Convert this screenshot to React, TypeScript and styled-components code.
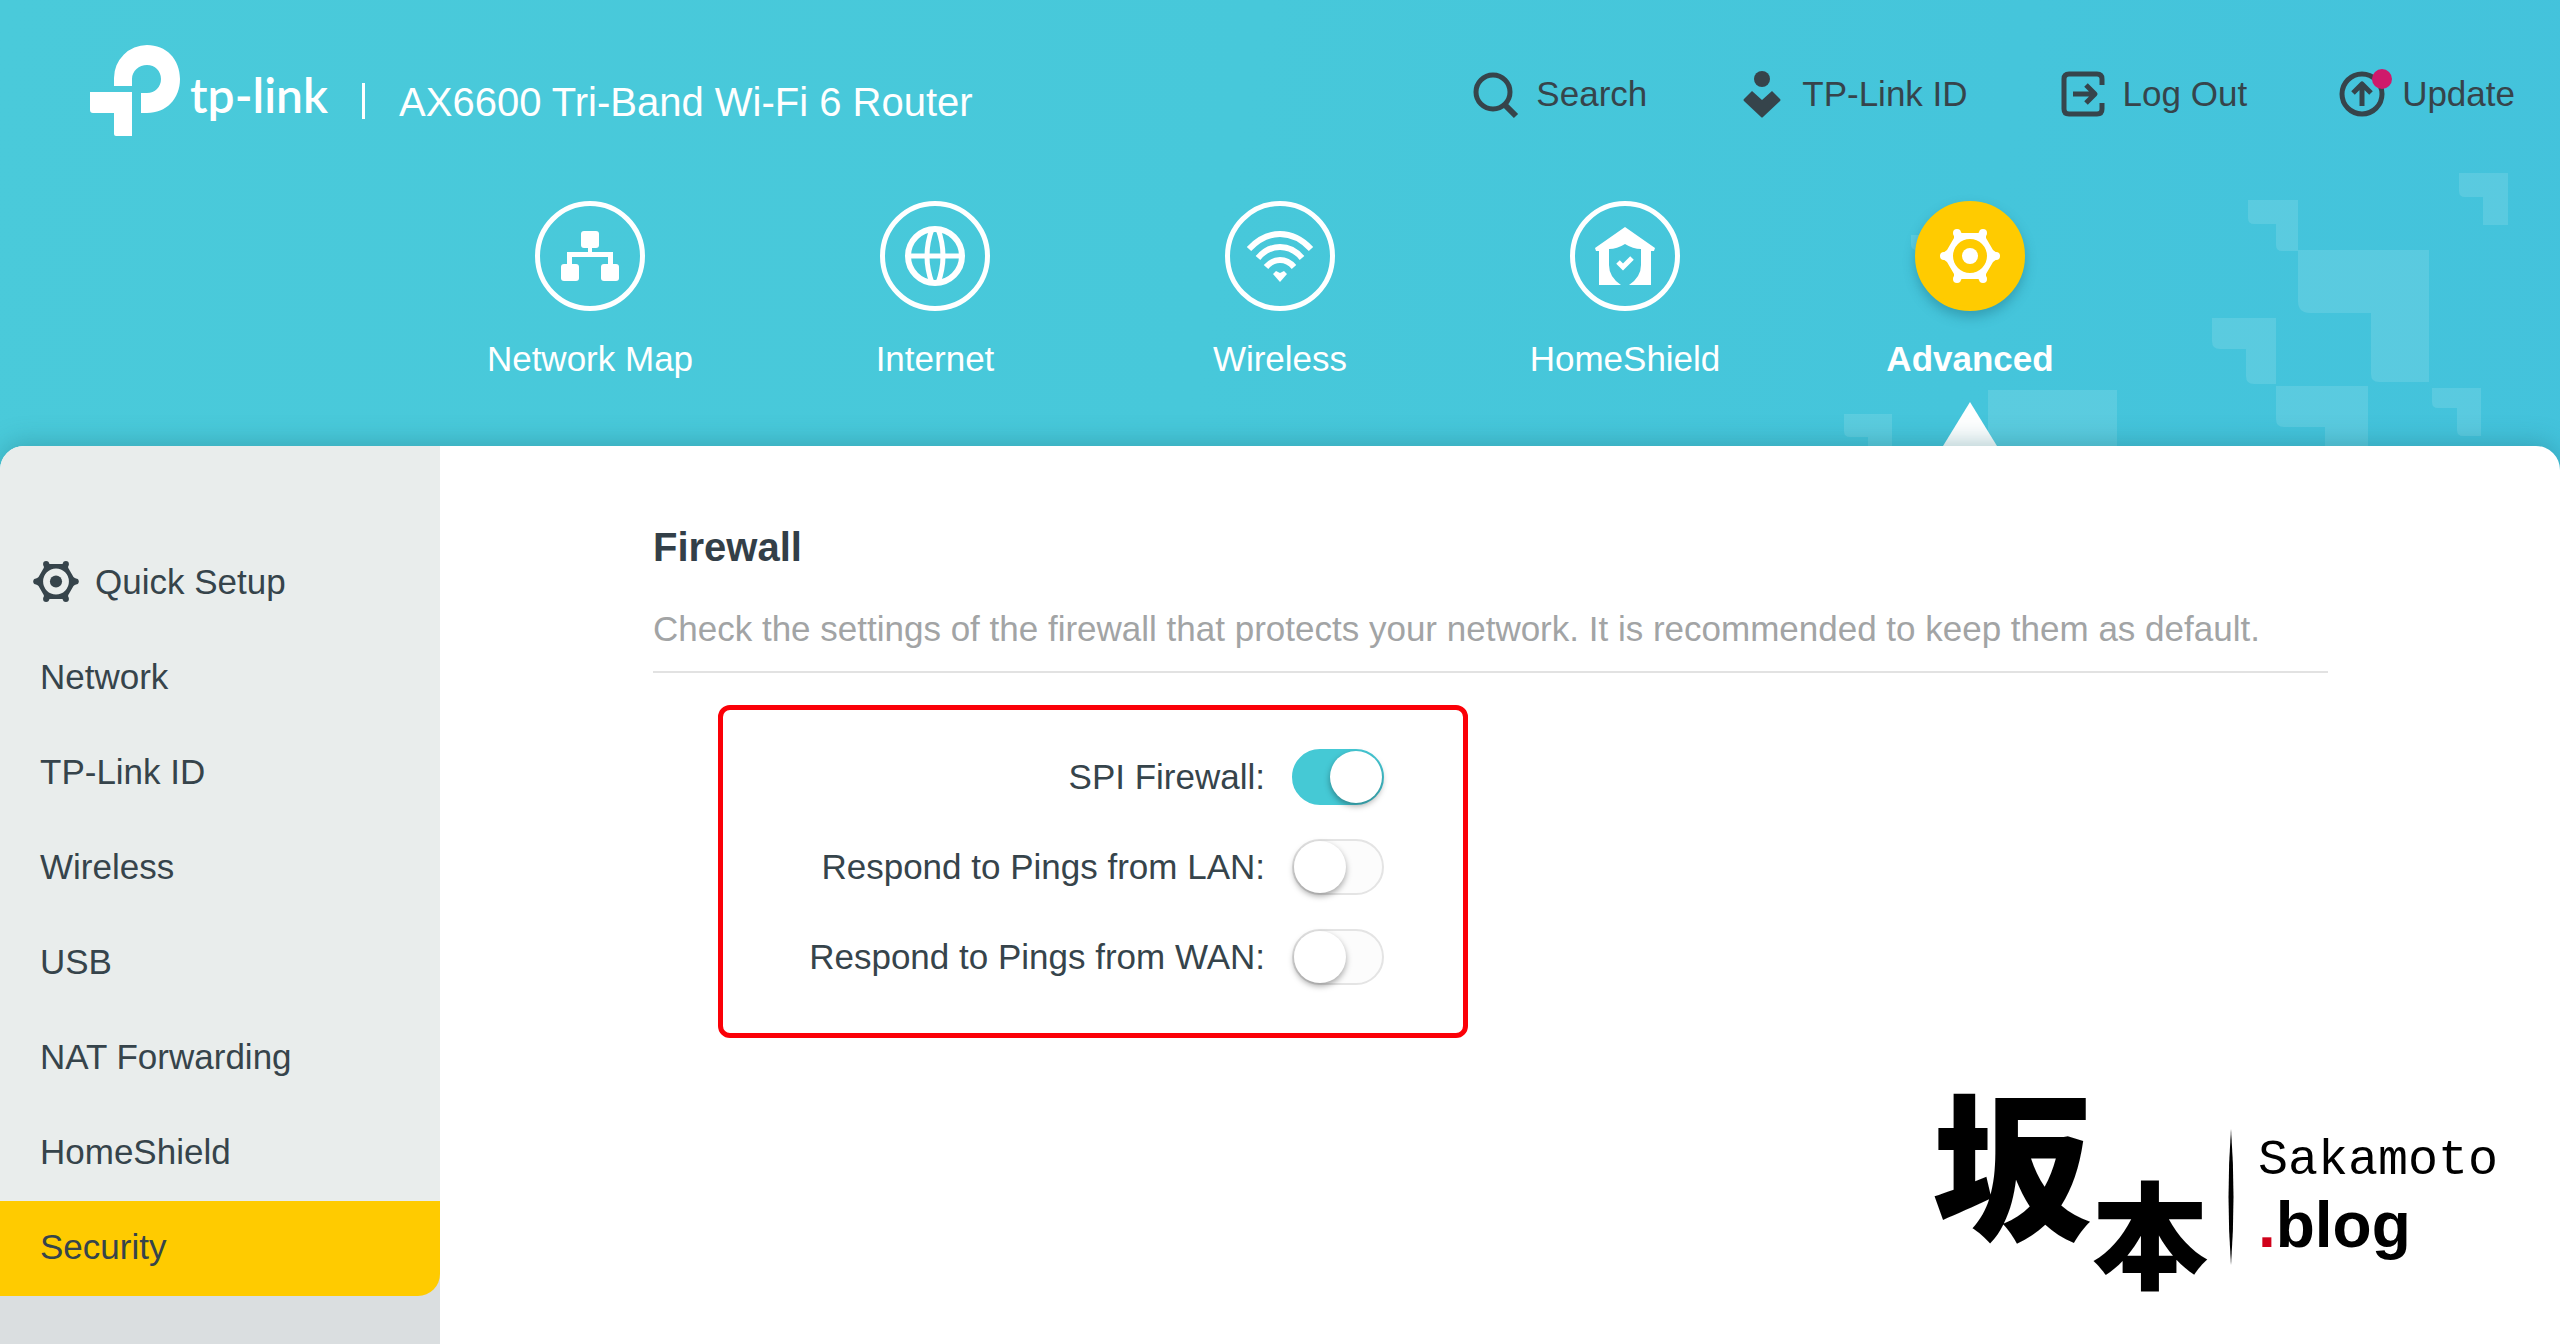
import React, { useState } from 'react';
import styled, { createGlobalStyle, css } from 'styled-components';

const GlobalStyle = createGlobalStyle`
  *, *::before, *::after { box-sizing: border-box; }
  body {
    margin: 0;
    font-family: "Liberation Sans", Arial, sans-serif;
    font-size: 35px;
    line-height: 40px;
    color: #36444b;
  }
  a { color: inherit; text-decoration: none; }
  ul { list-style: none; margin: 0; padding: 0; }
  h1, p { margin: 0; }
`;

const Page = styled.div`
  min-height: 100vh;
  display: flex;
  flex-direction: column;
  background: linear-gradient(100deg, #4acada 0%, #47c8da 45%, #43c2dc 100%);
`;

const Header = styled.header`
  position: relative;
`;

const Pattern = styled.svg`
  position: absolute;
  right: 0;
  bottom: 0;
  width: 760px;
  height: 296px;
  fill: #ffffff;
  fill-opacity: 0.12;
`;

const TopBar = styled.div`
  position: relative;
  display: flex;
  justify-content: space-between;
  align-items: flex-start;
  padding: 45px 45px 0 90px;
`;

const Brand = styled.div`
  display: flex;
  align-items: flex-start;
  color: #ffffff;
`;

const Wordmark = styled.span`
  margin: 22px 0 0 10px;
  font-family: Lato, "Liberation Sans", sans-serif;
  font-size: 48px;
  font-weight: 600;
  line-height: 56px;
`;

const BrandRule = styled.span`
  width: 3px;
  height: 36px;
  margin: 38px 34px 0;
  background: #ffffff;
`;

const Model = styled.span`
  margin-top: 32px;
  font-size: 40px;
  line-height: 50px;
`;

const Tools = styled.nav`
  display: flex;
  gap: 93px;
  padding-top: 26px;
`;

const Tool = styled.a`
  display: flex;
  align-items: center;
  gap: 18px;
  height: 46px;
`;

const ToolIcon = styled.svg`
  width: 44px;
  height: 46px;
  overflow: visible;
  fill: none;
  stroke: currentColor;
  stroke-width: 5;
  stroke-linejoin: round;
`;

const MainNav = styled.nav`
  position: relative;
  display: flex;
  justify-content: center;
  padding-top: 65px;
  height: 310px;
`;

const NavItem = styled.a`
  display: flex;
  flex-direction: column;
  align-items: center;
  width: 345px;
  color: #ffffff;
`;

const NavCircle = styled.span<{ $active?: boolean }>`
  display: flex;
  align-items: center;
  justify-content: center;
  width: 110px;
  height: 110px;
  margin-bottom: 28px;
  border: 5px solid #ffffff;
  border-radius: 50%;
  ${p => p.$active && css`
    border-color: #ffcb00;
    background: #ffcb00;
    box-shadow: 0 6px 12px rgba(20, 90, 110, 0.35);
  `}
`;

const NavLabel = styled.span<{ $active?: boolean }>`
  font-weight: ${p => (p.$active ? 700 : 400)};
`;

const NavPointer = styled.span`
  margin-top: auto;
  border: 27px solid transparent;
  border-top-width: 0;
  border-bottom: 44px solid #ffffff;
`;

const Panel = styled.div`
  position: relative;
  flex: 1;
  display: flex;
  border-radius: 24px 24px 0 0;
  background: #ffffff;
  box-shadow: 0 -4px 24px rgba(30, 110, 120, 0.35);
`;

const Sidebar = styled.aside`
  display: flex;
  flex-direction: column;
  flex: 0 0 440px;
  padding-top: 90px;
  border-top-left-radius: 24px;
  background: #e9edec;
`;

const SideLink = styled.a<{ $active?: boolean; $icon?: boolean }>`
  display: flex;
  align-items: center;
  gap: 16px;
  height: 95px;
  padding: 0 0 4px ${p => (p.$icon ? 33 : 40)}px;
  ${p => p.$active && css`
    border-bottom-right-radius: 22px;
    background: #ffcb00;
  `}
`;

const SubMenu = styled.div`
  flex: 1;
  min-height: 48px;
  margin-top: -22px;
  background: #dadee0;
`;

const SideList = styled.ul`
  position: relative;
  z-index: 1;
`;

const Content = styled.main`
  flex: 1;
  padding: 76px 232px 0 213px;
`;

const Title = styled.h1`
  font-size: 40px;
  font-weight: 700;
  line-height: 50px;
  color: #333f48;
`;

const Description = styled.p`
  padding: 37px 0 22px;
  border-bottom: 2px solid #e2e2e2;
  color: #a2a4a5;
`;

const Settings = styled.form`
  display: flex;
  flex-direction: column;
  width: 750px;
  margin: 32px 0 0 65px;
  padding: 22px 79px 31px 0;
  border: 5px solid #fb0007;
  border-radius: 12px;
`;

const Setting = styled.div`
  display: flex;
  align-items: center;
  justify-content: flex-end;
  gap: 27px;
  height: 90px;
`;

const Switch = styled.input`
  appearance: none;
  display: flex;
  width: 92px;
  height: 56px;
  margin: 0;
  border: 2px solid #e4e4e4;
  border-radius: 28px;
  background: #fcfcfc;
  cursor: pointer;

  &::before {
    content: "";
    width: 52px;
    height: 52px;
    border-radius: 50%;
    background: #ffffff;
    box-shadow: 0 3px 6px rgba(0, 0, 0, 0.35);
  }
  &:checked {
    justify-content: flex-end;
    border-color: #45c9d5;
    background: #45c9d5;
  }
`;

const Signature = styled.div`
  position: absolute;
  right: 62px;
  bottom: 57px;
  display: flex;
  height: 208px;
  color: #000000;
`;

const Kanji = styled.span<{ $size: number; $low?: boolean }>`
  align-self: ${p => (p.$low ? 'flex-end' : 'flex-start')};
  font-family: "Noto Sans CJK JP", sans-serif;
  font-weight: 900;
  font-size: ${p => p.$size}px;
  line-height: ${p => p.$size}px;
`;

const SignatureRule = styled.svg`
  width: 6px;
  height: 136px;
  margin: 50px 24px 0 20px;
`;

const SignatureName = styled.div`
  display: flex;
  flex-direction: column;
  padding-top: 54px;
`;

const Author = styled.span`
  font-family: "Liberation Mono", monospace;
  font-size: 50px;
  line-height: 56px;
`;

const Blog = styled.span`
  font-size: 64px;
  font-weight: 700;
  line-height: 72px;
`;

const BlogDot = styled.span`
  color: #d0021b;
`;

function Gear({ width, height }: { width: number; height: number }) {
  const knobs = [[4, 27], [17, 4], [43, 4], [56, 27], [43, 50], [17, 50]];
  return (
    <svg width={width} height={height} viewBox="0 0 60 54" fill="currentColor" aria-hidden="true">
      <path
        fillRule="evenodd"
        d="M3 24 L7 21 L14 9 L14 4 L20 3 L22 4 H38 L40 3 L46 4 L46 9 L53 21 L57 24 V30 L53 33 L46 45 L46 50 L40 51 L38 50 H22 L20 51 L14 50 L14 45 L7 33 L3 30Z M30 10 a17 17 0 1 0 0 34 a17 17 0 1 0 0-34Z"
      />
      {knobs.map(([x, y]) => <circle key={`${x}-${y}`} cx={x} cy={y} r={4} />)}
      <circle cx={30} cy={27} r={8} />
    </svg>
  );
}

function LogoMark() {
  return (
    <svg width="90" height="91" viewBox="0 0 90 91" fill="currentColor" aria-hidden="true">
      <path d="M24 41 V33 A33 33 0 0 1 57 0 C76 0 90 14 90 34 C90 54 76 68 57 68 H51 V48 H57 C65 48 71 42 71 34 C71 26 65 20 57 20 C49 20 42 26 42 34 V41Z" />
      <path d="M0 47 H42 V91 H26 Q24 91 24 89 V68 H3 Q0 68 0 65Z" />
    </svg>
  );
}

const tools = [
  {
    label: 'Search',
    icon: <><circle cx="19" cy="21" r="17" /><path d="M31 34 L42 45" strokeWidth="6" /></>,
  },
  {
    label: 'TP-Link ID',
    icon: (
      <g fill="currentColor" stroke="none">
        <circle cx="22" cy="8" r="8" />
        <path d="M12 20 L22 29 L32 20 L40 28 Q41 29 40 30 L23 46 Q22 47 21 46 L4 30 Q3 29 4 28Z" />
      </g>
    ),
  },
  {
    label: 'Log Out',
    icon: (
      <>
        <path d="M41 14 V8 Q41 3 36 3 H8 Q3 3 3 8 V38 Q3 43 8 43 H36 Q41 43 41 38 V32" strokeWidth="5" />
        <path d="M12 23 H33 M25 14 L34 23 L25 32" />
      </>
    ),
  },
  {
    label: 'Update',
    icon: (
      <>
        <circle cx="22" cy="23" r="20" />
        <path d="M22 35 V14 M13 22 L22 13 L31 22" />
        <circle cx="42" cy="8" r="10" fill="#cf1a6b" stroke="none" />
      </>
    ),
  },
];

const sections = [
  {
    label: 'Network Map',
    icon: (
      <svg width="58" height="50" viewBox="0 0 58 50" fill="#fff">
        <rect x="20" y="0" width="18" height="17" rx="3" />
        <rect x="0" y="33" width="18" height="17" rx="3" />
        <rect x="40" y="33" width="18" height="17" rx="3" />
        <path d="M27 16 H31 V21 H52 V34 H47 V26 H11 V34 H6 V21 H27Z" />
      </svg>
    ),
  },
  {
    label: 'Internet',
    icon: (
      <svg width="60" height="60" viewBox="0 0 60 60" fill="none" stroke="#fff" strokeWidth="5">
        <circle cx="30" cy="30" r="27" strokeWidth="6" />
        <path d="M27 3 Q17 30 27 57 M33 3 Q43 30 33 57 M3 30 H57" />
      </svg>
    ),
  },
  {
    label: 'Wireless',
    icon: (
      <svg width="68" height="52" viewBox="0 0 68 52" fill="none" stroke="#fff" strokeWidth="6">
        <path d="M3 19 Q17 4 34 4 Q51 4 65 19" />
        <path d="M12 28 Q21 17 34 17 Q47 17 56 28" />
        <path d="M20 37 Q26 30 34 30 Q42 30 48 37" />
        <path d="M27 44 L30 41 L34 43 L38 41 L41 44 L34 52Z" fill="#fff" stroke="none" />
      </svg>
    ),
  },
  {
    label: 'HomeShield',
    icon: (
      <svg width="60" height="58" viewBox="0 0 60 58" fill="#fff">
        <path
          fillRule="evenodd"
          d="M30 0 L60 21 L59 24 H56 V58 H34 Q46 50 46 38 V22 Q38 22 30 17 Q22 22 14 22 V38 Q14 50 26 58 H4 V24 H1 L0 21Z"
        />
        <path d="M23 35 L28 40 L37 31" fill="none" stroke="#fff" strokeWidth="5" />
      </svg>
    ),
  },
  { label: 'Advanced', active: true, icon: <Gear width={60} height={54} /> },
];

const sideLinks = ['Network', 'TP-Link ID', 'Wireless', 'USB', 'NAT Forwarding', 'HomeShield', 'Security'];

const settings = [
  { id: 'spi', label: 'SPI Firewall:', on: true },
  { id: 'lan', label: 'Respond to Pings from LAN:', on: false },
  { id: 'wan', label: 'Respond to Pings from WAN:', on: false },
];

export default function App() {
  const [values, setValues] = useState<Record<string, boolean>>(
    Object.fromEntries(settings.map(s => [s.id, s.on])),
  );

  return (
    <Page>
      <GlobalStyle />
      <Header>
        <Pattern viewBox="0 0 760 296" aria-hidden="true">
          <path d="M448 50 h50 v51 h-16 q-6 0-6-6 v-21 h-22 q-6 0-6-6Z" />
          <path d="M498 100 h131 v132 h-50 q-8 0-8-8 v-61 h-61 q-12 0-12-12Z" />
          <path d="M412 168 h64 v66 h-22 q-8 0-8-8 v-27 h-26 q-8 0-8-8Z" />
          <path d="M476 236 h92 v60 h-43 v-19 h-41 q-8 0-8-8Z" />
          <path d="M632 238 h49 v48 h-18 q-6 0-6-6 v-22 h-19 q-6 0-6-6Z" />
          <path d="M659 23 h49 v52 h-25 v-28 h-18 q-6 0-6-6Z" />
          <path d="M44 264 h48 v32 h-24 v-9 h-18 q-6 0-6-6Z" />
          <path d="M188 240 h129 v56 h-129Z" />
          <path d="M111 85 h20 v15 h-14 q-6 0-6-6Z" />
        </Pattern>
        <TopBar>
          <Brand>
            <LogoMark />
            <Wordmark>tp-link</Wordmark>
            <BrandRule />
            <Model>AX6600 Tri-Band Wi-Fi 6 Router</Model>
          </Brand>
          <Tools aria-label="Account">
            {tools.map(t => (
              <Tool key={t.label} href="#">
                <ToolIcon viewBox="0 0 44 46" aria-hidden="true">{t.icon}</ToolIcon>
                {t.label}
              </Tool>
            ))}
          </Tools>
        </TopBar>
        <MainNav aria-label="Sections">
          {sections.map(s => (
            <NavItem key={s.label} href="#">
              <NavCircle $active={s.active}>{s.icon}</NavCircle>
              <NavLabel $active={s.active}>{s.label}</NavLabel>
              {s.active && <NavPointer />}
            </NavItem>
          ))}
        </MainNav>
      </Header>
      <Panel>
        <Sidebar>
          <SideList>
            <li>
              <SideLink href="#" $icon>
                <Gear width={46} height={41} />
                Quick Setup
              </SideLink>
            </li>
            {sideLinks.map(label => (
              <li key={label}>
                <SideLink href="#" $active={label === 'Security'}>{label}</SideLink>
              </li>
            ))}
          </SideList>
          <SubMenu />
        </Sidebar>
        <Content>
          <Title>Firewall</Title>
          <Description>
            Check the settings of the firewall that protects your network. It is recommended to keep them as default.
          </Description>
          <Settings>
            {settings.map(s => (
              <Setting key={s.id}>
                <label htmlFor={s.id}>{s.label}</label>
                <Switch
                  id={s.id}
                  type="checkbox"
                  role="switch"
                  checked={values[s.id]}
                  onChange={e => setValues({ ...values, [s.id]: e.target.checked })}
                />
              </Setting>
            ))}
          </Settings>
        </Content>
        <Signature>
          <Kanji $size={160}>坂</Kanji>
          <Kanji $size={116} $low>本</Kanji>
          <SignatureRule viewBox="0 0 6 136" aria-hidden="true">
            <path d="M3 0 Q8 68 3 136 Q-2 68 3 0Z" />
          </SignatureRule>
          <SignatureName>
            <Author>Sakamoto</Author>
            <Blog><BlogDot>.</BlogDot>blog</Blog>
          </SignatureName>
        </Signature>
      </Panel>
    </Page>
  );
}
